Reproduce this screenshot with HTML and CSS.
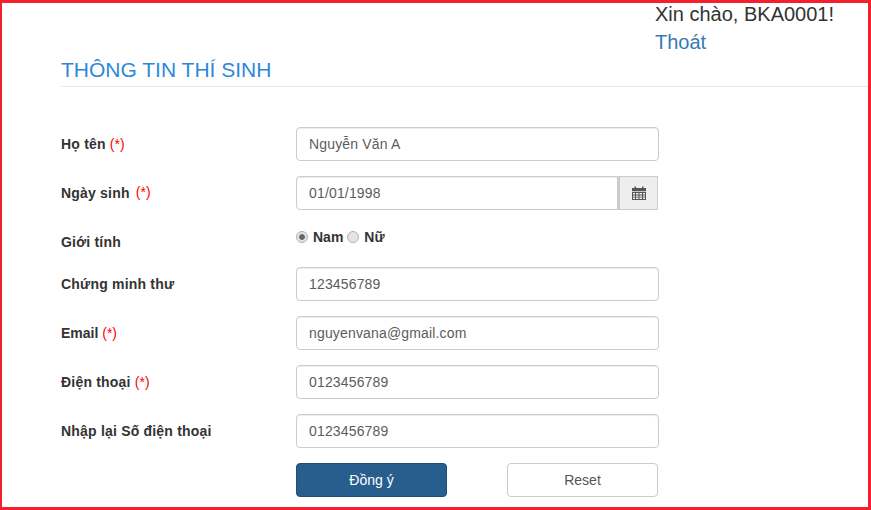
FILE: index.html
```html
<!DOCTYPE html>
<html lang="en">
<head>
  <meta charset="UTF-8" />
  <meta name="viewport" content="width=device-width, initial-scale=1.0"/>
  <title>Thông tin thí sinh</title>
  <link rel="stylesheet" href="styles.css">
</head>
<body>
  <div class="frame">
    <div class="greeting">
      <div>Xin chào, BKA0001!</div>
      <a href="#" class="logout">Thoát</a>
    </div>

    <h2 class="page-title">THÔNG TIN THÍ SINH</h2>

    <form class="info-form">
      <div class="form-row">
        <label class="field-label">Họ tên <span class="required">(*)</span></label>
        <input class="form-input" type="text" value="Nguyễn Văn A">
      </div>

      <div class="form-row">
        <label class="field-label">Ngày sinh <span class="required date-mark">(*)</span></label>
        <div class="date-group">
          <input class="form-input date-input" type="text" value="01/01/1998">
          <span class="date-addon">
            <svg class="cal-icon" width="14" height="14" viewBox="0 0 14 14">
              <path fill="#555" d="M0 2h2.5V0.6h1.5V2h6V0.6h1.5V2H14v3H0z"/>
              <path fill="#555" fill-rule="evenodd" d="M0 5.8h14V14H0zM1 7v1.4h2V7zM4 7v1.4h2.5V7zM7.5 7v1.4H10V7zM11 7v1.4h2V7zM1 9.4v1.4h2V9.4zM4 9.4v1.4h2.5V9.4zM7.5 9.4v1.4H10V9.4zM11 9.4v1.4h2V9.4zM1 11.6V13h2v-1.4zM4 11.6V13h2.5v-1.4zM7.5 11.6V13H10v-1.4zM11 11.6V13h2v-1.4z"/>
            </svg>
          </span>
        </div>
      </div>

      <div class="form-row gender-row">
        <label class="field-label">Giới tính</label>
        <div class="gender-options">
          <input class="radio" type="radio" name="gender" checked>
          <span class="gender-text">Nam</span>
          <input class="radio" type="radio" name="gender">
          <span class="gender-text">Nữ</span>
        </div>
      </div>

      <div class="form-row">
        <label class="field-label">Chứng minh thư</label>
        <input class="form-input" type="text" value="123456789">
      </div>

      <div class="form-row">
        <label class="field-label email-label">Email <span class="required">(*)</span></label>
        <input class="form-input" type="text" value="nguyenvana@gmail.com">
      </div>

      <div class="form-row">
        <label class="field-label">Điện thoại <span class="required">(*)</span></label>
        <input class="form-input" type="text" value="0123456789">
      </div>

      <div class="form-row">
        <label class="field-label">Nhập lại Số điện thoại</label>
        <input class="form-input" type="text" value="0123456789">
      </div>

      <div class="form-row">
        <span class="field-label"></span>
        <div class="actions">
          <button type="button" class="btn btn-primary">Đồng ý</button>
          <button type="button" class="btn btn-default">Reset</button>
        </div>
      </div>
    </form>
  </div>
</body>
</html>
```

FILE: styles.css
```css
* {
  box-sizing: border-box;
}
body {
  margin: 0;
  font-family: "Liberation Sans", Arial, sans-serif;
  font-size: 14px;
  color: #333;
  background: #fff;
}
.frame {
  width: 871px;
  height: 510px;
  overflow: hidden;
  border-style: solid;
  border-color: #f5202e;
  border-width: 3px 3px 3px 2px;
}
.greeting {
  margin: -3px 0 0 653px;
  font-size: 20px;
  line-height: 28px;
}
.logout {
  color: #337ab7;
  text-decoration: none;
}
.page-title {
  margin: 3px 0 0 59px;
  padding-bottom: 5px;
  border-bottom: 1px solid #e8e8e8;
  font-size: 21px;
  font-weight: normal;
  line-height: 22px;
  color: #2f87d8;
}
.info-form {
  margin: 40px 0 0 59px;
}
.form-row {
  display: flex;
  align-items: center;
  height: 34px;
  margin-bottom: 15px;
}
.field-label {
  width: 235px;
  font-weight: bold;
  letter-spacing: 0.2px;
}
.email-label {
  letter-spacing: 0;
}
.required {
  font-weight: normal;
  letter-spacing: 0;
  color: #f00;
}
.date-mark {
  margin-left: 2px;
  position: relative;
  top: -1px;
}
.form-input {
  width: 363px;
  height: 34px;
  padding: 6px 12px;
  border: 1px solid #ccc;
  border-radius: 4px;
  font-family: inherit;
  font-size: 14px;
  letter-spacing: 0.16px;
  color: #5c5c5c;
  box-shadow: inset 0 1px 1px rgba(0,0,0,0.075);
}
.date-group {
  display: flex;
  width: 362px;
}
.date-input {
  width: 322px;
  border-radius: 4px 0 0 4px;
}
.date-addon {
  display: flex;
  align-items: center;
  justify-content: center;
  width: 40px;
  height: 34px;
  background: #eee;
  border: 1px solid #ccc;
  border-left-width: 2px;
}
.gender-row {
  height: 27px;
  align-items: flex-start;
}
.gender-row .field-label {
  margin-top: 9px;
}
.gender-options {
  display: flex;
  align-items: center;
  height: 23px;
}
.gender-text {
  font-weight: bold;
}
.radio {
  appearance: none;
  width: 12px;
  height: 12px;
  margin: 0 5px 0 0;
  border: 1px solid #b0b0b0;
  border-radius: 50%;
  background: #e4e4e4;
}
.radio:checked {
  background: radial-gradient(circle, #666 0 2.5px, #e4e4e4 3.2px);
}
.gender-text + .radio {
  margin-left: 4px;
}
.actions {
  display: flex;
  justify-content: space-between;
  width: 362px;
}
.btn {
  width: 151px;
  height: 34px;
  border-radius: 4px;
  font-family: inherit;
  font-size: 14px;
}
.btn-primary {
  background: #285e8e;
  border: 1px solid #204d74;
  color: #fff;
}
.btn-default {
  background: #fff;
  border: 1px solid #ccc;
  color: #555;
}
```
